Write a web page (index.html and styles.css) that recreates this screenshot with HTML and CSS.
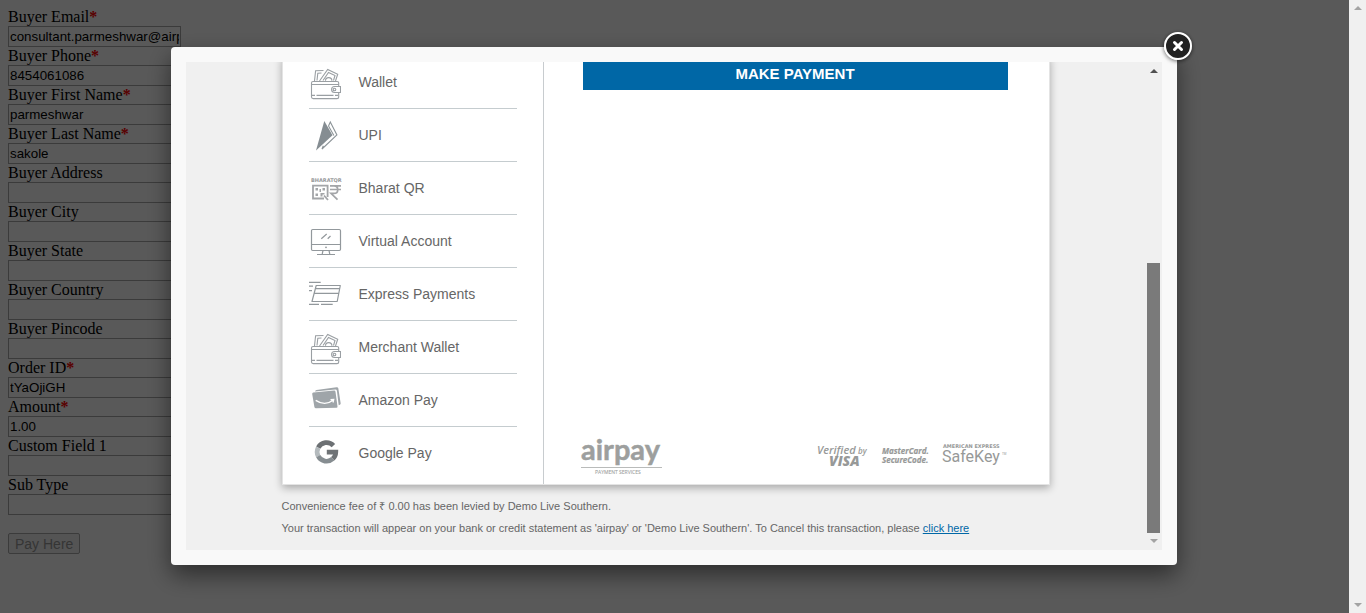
FILE: index.html
```html
<!DOCTYPE html>
<html lang="en">
<head>
<meta charset="utf-8">
<title>Payment</title>
<link rel="stylesheet" href="styles.css">
</head>
<body>
<form class="buyer-form">
  <label for="email">Buyer Email<span class="req">*</span></label>
  <input id="email" type="text" value="consultant.parmeshwar@airpay.co.in">
  <label for="phone">Buyer Phone<span class="req">*</span></label>
  <input id="phone" type="text" value="8454061086">
  <label for="first">Buyer First Name<span class="req">*</span></label>
  <input id="first" type="text" value="parmeshwar">
  <label for="last">Buyer Last Name<span class="req">*</span></label>
  <input id="last" type="text" value="sakole">
  <label for="address">Buyer Address</label>
  <input id="address" type="text">
  <label for="city">Buyer City</label>
  <input id="city" type="text">
  <label for="state">Buyer State</label>
  <input id="state" type="text">
  <label for="country">Buyer Country</label>
  <input id="country" type="text">
  <label for="pincode">Buyer Pincode</label>
  <input id="pincode" type="text">
  <label for="order">Order ID<span class="req">*</span></label>
  <input id="order" type="text" value="tYaOjiGH">
  <label for="amount">Amount<span class="req">*</span></label>
  <input id="amount" type="text" value="1.00">
  <label for="custom">Custom Field 1</label>
  <input id="custom" type="text">
  <label for="subtype">Sub Type</label>
  <input id="subtype" type="text">
  <button class="pay-here" type="submit" disabled>Pay Here</button>
</form>

<svg class="defs" width="0" height="0" aria-hidden="true">
  <symbol id="i-wallet" viewBox="0 0 32 36">
    <g fill="none" stroke="#9a9fa3" stroke-width="1.1">
      <path d="M5.500 17 6.600 6.800 14.500 6.500M8 16.500 8.800 9.300 12.500 9M10.500 17 18.700 5.500 28.700 10.200 26.500 17"/>
      <path d="M14 16.500 19.500 8.500 26 11.500 24.500 16.500M16.500 16.800a3.200 3.200 0 0 1 6.400 0"/>
      <path d="M29.700 22.500V19a1.500 1.500 0 0 0-1.500-1.500H4A1.500 1.500 0 0 0 2.500 19v14A1.700 1.700 0 0 0 4.200 34.600H28a1.700 1.700 0 0 0 1.700-1.700v-4.400M2.500 20.500H29.700M3 31.400H6M7.500 31.400H24.500M26 31.400H29"/>
      <path d="M31.500 22.500H25.600a3 3 0 0 0 0 6H31.500Z"/><circle cx="25.500" cy="25.500" r="1.300"/>
    </g>
  </symbol>
</svg>

<div class="overlay">
  <div class="backdrop">
    <div class="modal" role="dialog" aria-label="Payment">
      <div class="frame">
        <main class="view">
          <div class="card">
            <nav class="methods">
              <a href="#"><svg class="icon"><use href="#i-wallet"/></svg>Wallet</a>
              <a href="#"><svg class="icon" viewBox="0 0 32 36"><path fill="#858d92" d="M15.300 4 23.500 18.300 7 33.500Z"/><path fill="none" stroke="#8c9498" stroke-width="1.100" d="M19.500 9 21.300 5 27.900 18 13 32 14.300 28.800M19.500 9 24.900 18.500"/></svg>UPI</a>
              <a href="#"><svg class="icon" viewBox="0 0 32 36"><text x="2" y="12" font-family="DejaVu Sans, sans-serif" font-weight="700" font-size="5" fill="#97999b">BHARATQR</text><path fill="none" stroke="#a3a5a8" stroke-width="1.800" d="M15 28.500H4V15.700H18.600V27M15 25.500 19 30"/><path fill="#a3a5a8" d="M6.500 18h2.500v2.500h-2.500zM13.500 18h2.500v2.500h-2.500zM6.500 23.500h2.500v2.500h-2.500zM10.500 19h1.500v3h-1.500zM11.500 23h4v1.500h-2v2h-2z"/><path fill="none" stroke="#a3a5a8" stroke-width="1.700" d="M21 15.900H32M21 19.500H32M22 15.900H25C30 15.900 30 23.400 25 23.400H22L28.500 29.700"/></svg>Bharat QR</a>
              <a href="#"><svg class="icon" viewBox="0 0 32 36"><g fill="none" stroke="#92989c" stroke-width="1.200"><rect x="2.500" y="6.500" width="29" height="21" rx="1.200"/><path d="M2.500 21.500H31.500M14 27.500 13.200 31M20 27.500 20.800 31M8 31.500H26M12.300 15.700 17.700 11M18.700 15.700 21.500 13"/></g><circle cx="17" cy="24.300" r=".9" fill="#92989c"/></svg>Virtual Account</a>
              <a href="#"><svg class="icon" viewBox="0 0 32 36"><path fill="none" stroke="#92989c" stroke-width="1.200" stroke-linejoin="round" d="M7.200 9.500H31.300L28.200 25.500H3ZM6.500 12.700H30.500M5.600 17.300H29.700M0 6.400H11.700M0 10.200H4M0 14.700H3M0 28.400H10M12 28.400H23.700"/></svg>Express Payments</a>
              <a href="#"><svg class="icon"><use href="#i-wallet"/></svg>Merchant Wallet</a>
              <a href="#"><svg class="icon" viewBox="0 0 32 36"><path fill="#9fa5a9" d="M4.300 10.600 25 8.600Q26.300 8.500 26.500 9.700L28.500 24.500Q28.600 25.700 27.500 25.800L7 26.300Q5.700 26.300 5.400 25L3.200 12Q3.100 10.700 4.300 10.600ZM6 9.400Q6.300 8.300 7.500 8.100L27.500 5.200Q29 5 29.300 6.300L31.700 21.500Q31.800 22.600 29.700 23.300L27.900 8.800Q27.700 7.300 26.300 7.400Z"/><path fill="none" stroke="#fff" stroke-width="1.300" d="M6.700 18.400Q16 24.500 24 18.300M21.500 17.600 24.700 17.500 24 20.500"/></svg>Amazon Pay</a>
              <a href="#"><svg class="icon" viewBox="0 0 32 36"><g fill="none" stroke-width="4.700"><path stroke="#6c7073" d="M24.400 10.600A9.400 9.400 0 0 0 9.200 12.600"/><path stroke="#b4babd" d="M9.200 12.600A9.400 9.400 0 0 0 9.200 21.200"/><path stroke="#868d91" d="M9.200 21.200A9.400 9.400 0 0 0 23.800 23.800"/><path stroke="#6f7376" d="M23.800 23.800A9.400 9.400 0 0 0 26.800 17.200H17.800"/></g></svg>Google Pay</a>
            </nav>
            <section class="panel">
              <button class="make-payment" type="button">MAKE PAYMENT</button>
              <div class="brands">
                <svg class="airpay" viewBox="0 0 82 36" role="img" aria-label="airpay payment services">
                  <text x="0" y="20" font-family="Lato, sans-serif" font-weight="700" font-size="29" fill="#9d9f9e" stroke="#9d9f9e" stroke-width=".5">airpay</text>
                  <path d="M0 27.500H81" stroke="#b9bbba"/>
                  <text x="14" y="34" font-family="Open Sans, sans-serif" font-size="5" fill="#a3a5a4" stroke="#a3a5a4" stroke-width=".1">PAYMENT SERVICES</text>
                </svg>
                <div class="secure">
                  <svg width="50" height="26" role="img" aria-label="Verified by Visa" font-family="Open Sans, sans-serif" font-style="italic" fill="#979998">
                    <text x="-1" y="11" font-size="11" font-weight="600">Verified</text><text x="40" y="11" font-size="8" font-weight="600">by</text>
                    <text x="11" y="23" font-size="14" font-weight="800">VISA</text>
                  </svg>
                  <svg width="46" height="26" role="img" aria-label="MasterCard SecureCode" font-family="Open Sans, sans-serif" font-style="italic" font-weight="700" font-size="8" fill="#979998" stroke="#979998" stroke-width=".2">
                    <text x="0" y="11">MasterCard.</text><text x="0" y="20">SecureCode.</text>
                  </svg>
                  <svg width="63" height="26" role="img" aria-label="American Express SafeKey" fill="#979998">
                    <text x="1" y="5" font-family="DejaVu Sans, sans-serif" font-size="5" font-weight="700">AMERICAN EXPRESS</text>
                    <text x="0" y="19" font-family="Roboto, sans-serif" font-size="16">SafeKey</text><text x="60" y="12" font-family="Roboto, sans-serif" font-size="3">TM</text>
                  </svg>
                </div>
              </div>
            </section>
          </div>
          <div class="notes">
            <p>Convenience fee of ₹ 0.00 has been levied by Demo Live Southern.</p>
            <p>Your transaction will appear on your bank or credit statement as 'airpay' or 'Demo Live Southern'. To Cancel this transaction, please <a href="#">click here</a></p>
          </div>
        </main>
        <div class="scroll inner-scroll" aria-hidden="true"><i class="up dark"></i><i class="thumb"></i><i class="down"></i></div>
      </div>
      <button class="close" type="button" aria-label="Close"><svg viewBox="0 0 28 28"><circle cx="14" cy="14" r="13" fill="#222" stroke="#fff" stroke-width="2"/><path d="M10.500 10.500 17.500 17.500M17.500 10.500 10.500 17.500" stroke="#fff" stroke-width="3" stroke-linecap="round"/></svg></button>
    </div>
  </div>
  <div class="scroll page-scroll" aria-hidden="true"><i class="up"></i><i class="down"></i></div>
</div>
</body>
</html>
```
FILE: styles.css
```css
* { box-sizing: border-box; }
body {
  margin: 8px;
  font-family: "Liberation Serif", "Times New Roman", serif;
  font-size: 16px;
  line-height: 18px;
  background: #fff;
}
.defs { position: absolute; }
.buyer-form {
  display: flex;
  flex-direction: column;
  align-items: flex-start;
}
.buyer-form input {
  width: 173px;
  height: 21px;
  padding: 1px;
  border: 1px solid #a9a9a9;
  background: transparent;
  font-family: "Liberation Sans", Arial, sans-serif;
}
.req { color: #f00; font-weight: bold; }
.pay-here {
  margin-top: 18px;
  height: 21px;
  padding: 0 6px;
  border: 1px solid #a9a9a9;
  border-radius: 2px;
  background: #f0f0f0;
  color: #999;
  font-family: "Liberation Sans", Arial, sans-serif;
  font-size: 14px;
  line-height: 18px;
}

.overlay {
  position: fixed;
  inset: 0;
  display: flex;
}
.backdrop {
  flex: 1;
  display: flex;
  padding: 47px 172px 48px 171px;
  background: rgba(0, 0, 0, .65);
}
.modal {
  position: relative;
  flex: 1;
  display: flex;
  min-width: 0;
  padding: 15px;
  border-radius: 4px;
  background: #f9f9f9;
  box-shadow: 0 10px 25px rgba(0, 0, 0, .5);
  font-family: "Liberation Sans", Arial, sans-serif;
  color: #666;
}
.frame {
  flex: 1;
  display: flex;
  min-width: 0;
  background: #f0f0f0;
}
.view {
  flex: 1;
  min-width: 0;
  padding-right: 2px;
  overflow: hidden;
}
.card, .notes {
  max-width: 768px;
  margin: 0 auto;
}
.card {
  display: flex;
  margin-top: -6px;
  border: 1px solid #e4e4e4;
  border-top: 0;
  background: #fff;
  box-shadow: 0 3px 8px rgba(0, 0, 0, .3);
}
.methods {
  width: 261px;
  padding: 0 26px 4px;
  border-right: 1px solid #c8cccf;
}
.methods a {
  display: flex;
  align-items: center;
  gap: 18px;
  height: 53px;
  border-bottom: 1px solid #c5cccf;
  color: #666;
  font-size: 14px;
  text-decoration: none;
}
.methods a:last-child { border-color: transparent; }
.icon {
  width: 32px;
  height: 36px;
  flex: none;
  overflow: visible;
}
.panel {
  flex: 1;
  display: flex;
  flex-direction: column;
  justify-content: space-between;
  padding: 2px 41px 8px 39px;
}
.make-payment {
  height: 32px;
  padding: 0 0 2px;
  border: 0;
  background: #0067a6;
  color: #fff;
  font: bold 15px "Liberation Sans", Arial, sans-serif;
}
.brands {
  display: flex;
  justify-content: space-between;
  align-items: flex-start;
  margin: 0 3px 0 -2px;
}
.airpay { width: 82px; height: 36px; }
.secure {
  display: flex;
  gap: 14px;
  padding-top: 3px;
}
.brands svg { overflow: visible; }
.notes {
  padding-top: 10px;
  font-size: 11px;
  line-height: 22px;
}
.notes p { margin: 0; }
.notes a { color: #0067a6; }

.scroll {
  display: flex;
  flex-direction: column;
  align-items: center;
  background: #f0f0f0;
}
.page-scroll { width: 17px; padding: 6px 0; justify-content: space-between; }
.inner-scroll { width: 15px; padding: 7px 2px 7px 0; }
.up, .down {
  border: 4px solid transparent;
}
.up { border-top: 0; border-bottom-color: #a3a3a3; }
.up.dark { border-bottom-color: #505050; }
.down { border-bottom: 0; border-top-color: #a3a3a3; }
.thumb {
  width: 100%;
  height: 57%;
  margin: auto 0 6px;
  background: #7a7a7a;
}
.close {
  position: absolute;
  top: -15px;
  right: -15px;
  width: 28px;
  height: 28px;
  padding: 0;
  border: 0;
  border-radius: 50%;
  background: none;
  box-shadow: 0 1px 4px rgba(0, 0, 0, .6);
}
.close svg { display: block; }
```
